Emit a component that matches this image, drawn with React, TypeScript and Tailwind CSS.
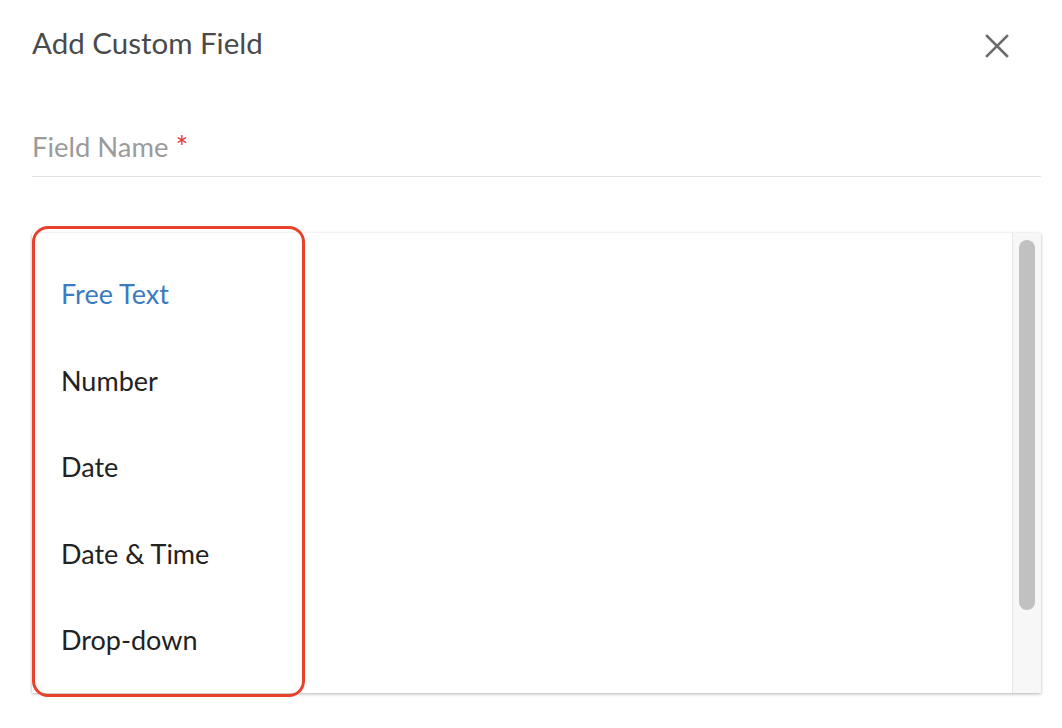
import React from "react";

const items = ["Free Text", "Number", "Date", "Date & Time", "Drop-down"];

export default function App() {
  return (
    <div
      className="w-[1062px] h-[728px] bg-white overflow-hidden"
      style={{ fontFamily: "Lato, 'Noto Sans', sans-serif" }}
    >
      <div className="pl-[32px] pr-[21px]">
        <div className="flex items-start justify-between pt-[25px] h-[80px]">
          <h1 className="text-[29.5px] leading-[36px] text-[#4a4a4a] font-normal">Add Custom Field</h1>
          <button className="mt-[9px] mr-[32px] text-[#6b6b6b]" aria-label="Close">
            <svg width="24" height="24" viewBox="0 0 24 24" fill="none" stroke="currentColor" strokeWidth="2.6" strokeLinecap="square">
              <path d="M2 2 L22 22 M22 2 L2 22" />
            </svg>
          </button>
        </div>
        <div className="pt-[51px] pb-[13px] border-b border-[#e3e3e3] flex items-start h-[97px]">
          <span className="text-[27.4px] leading-[32px] text-[#9b9b9b]">Field Name</span>
          <span className="ml-[7px] text-[30px] leading-[30px] text-[#e53935]">*</span>
        </div>
        <div className="relative mt-[56px] h-[460px] flex bg-white shadow-[0_1px_3px_rgba(0,0,0,0.3)]">
          <div className="flex-1 flex flex-col pt-[43px] pl-[29px]">
            {items.map((t, i) => (
              <div
                key={t}
                className={`shrink-0 h-[86.5px] text-[27px] leading-[36px] ${i === 0 ? "text-[#3b7bbf]" : "text-[#222]"}`}
              >
                {t}
              </div>
            ))}
          </div>
          <div className="w-[29px] bg-[#f7f7f7] border-l border-[#e6e6e6] flex justify-center pt-[7px]">
            <div className="w-[16px] h-[370px] rounded-full bg-[#c1c1c1]" />
          </div>
          <div className="absolute left-0 top-[-7px] w-[273px] h-[471px] border-[3px] border-[#e8412c] rounded-[16px] pointer-events-none" />
        </div>
      </div>
    </div>
  );
}
